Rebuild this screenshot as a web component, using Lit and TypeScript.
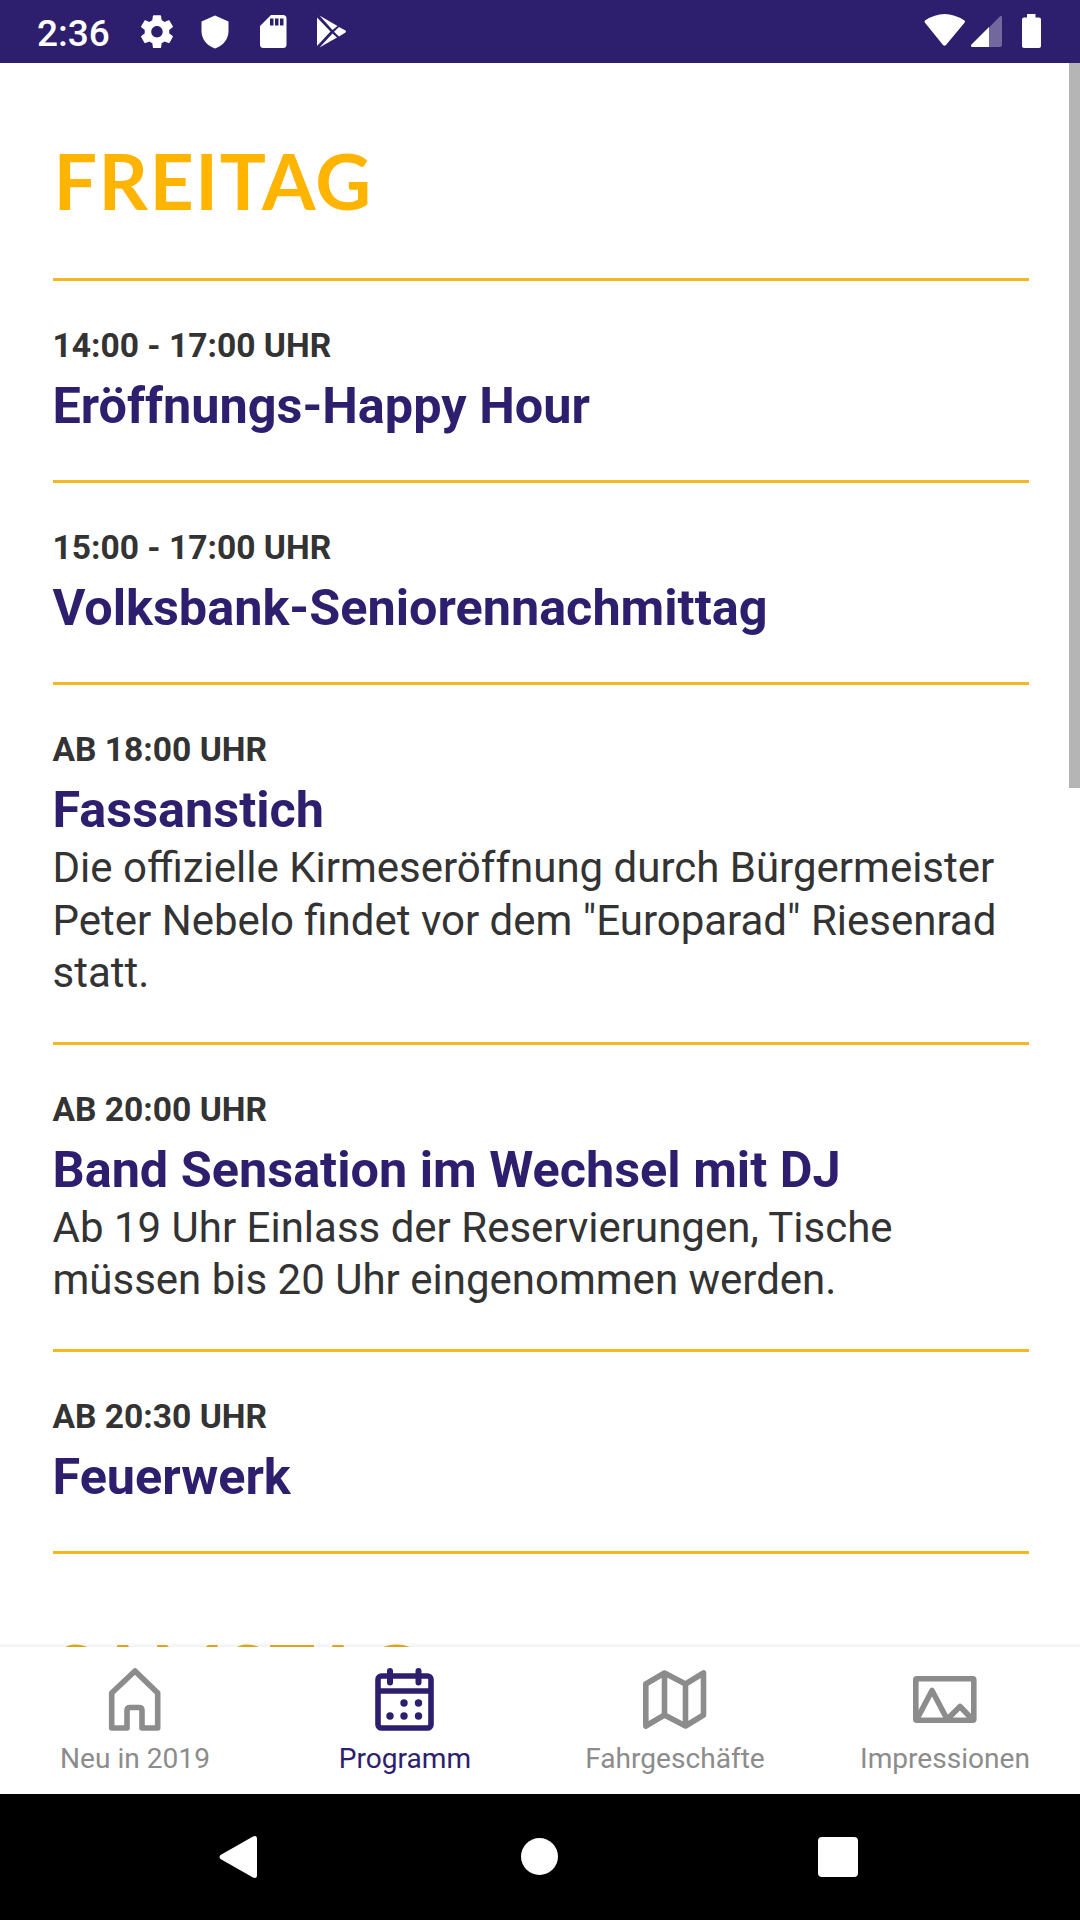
import { LitElement, html, css, svg, nothing } from "lit";
import { customElement } from "lit/decorators.js";

interface Entry {
  time: string;
  title: string;
  text?: string[];
}

const FRIDAY: Entry[] = [
  { time: "14:00 - 17:00 UHR", title: "Eröffnungs-Happy Hour" },
  { time: "15:00 - 17:00 UHR", title: "Volksbank-Seniorennachmittag" },
  {
    time: "AB 18:00 UHR",
    title: "Fassanstich",
    text: [
      "Die offizielle Kirmeseröffnung durch Bürgermeister",
      'Peter Nebelo findet vor dem "Europarad" Riesenrad',
      "statt.",
    ],
  },
  {
    time: "AB 20:00 UHR",
    title: "Band Sensation im Wechsel mit DJ",
    text: ["Ab 19 Uhr Einlass der Reservierungen, Tische", "müssen bis 20 Uhr eingenommen werden."],
  },
  { time: "AB 20:30 UHR", title: "Feuerwerk" },
];

const homeIcon = svg`<path d="M27 4 L49.700 26 V61 H34 V43.500 Q34 40.500 31 40.500 H22 Q19 40.500 19 43.500 V61 H3.700 V26 Z"/>`;
const calendarIcon = svg`
  <rect x="3" y="9" width="53" height="52" rx="3.500"/>
  <path d="M3 24 H56"/>
  <path d="M15 4 V15.500 M43.500 4 V15.500" stroke-linecap="round" stroke-width="6"/>
  <g class="dots"><circle cx="29" cy="36" r="3.700"/><circle cx="43.500" cy="36" r="3.700"/>
  <circle cx="15" cy="49" r="3.700"/><circle cx="29" cy="49" r="3.700"/><circle cx="43.500" cy="49" r="3.700"/></g>`;

@customElement("app-root")
export class AppRoot extends LitElement {
  static styles = css`
    :host {
      display: flex;
      flex-direction: column;
      width: 1080px;
      height: 1920px;
      overflow: hidden;
      background: #fff;
      font-family: Roboto, sans-serif;
      color: #333;
    }
    svg { display: block; }
    .status {
      height: 63px;
      flex: none;
      box-sizing: border-box;
      background: #2d1e6e;
      color: #fff;
      display: flex;
      align-items: center;
      padding-left: 37px;
    }
    .clock { width: 101px; font-size: 37px; font-weight: 500; line-height: 63px; padding-top: 3px; }
    .right { margin-left: auto; }
    .scroll {
      flex: 1;
      min-height: 0;
      overflow: hidden;
      display: flex;
      justify-content: space-between;
    }
    .program { width: 976px; padding-left: 52.5px; }
    .bar { width: 11px; height: 725px; background: #b5b5b5; }
    .day {
      height: 218px;
      box-sizing: border-box;
      padding: 70px 0 0 1px;
      font-family: Lato, sans-serif;
      font-weight: 700;
      font-size: 77px;
      line-height: 94px;
      letter-spacing: 1.500px;
      color: #ffb400;
      white-space: nowrap;
      border-bottom: 3px solid #f6b81f;
    }
    .day.next { border: 0; color: #e6ac20; padding-top: 70px; }
    .entry {
      box-sizing: border-box;
      padding: 44px 0 42px;
      border-bottom: 3px solid #f6b81f;
    }
    .time { font-size: 33.6px; line-height: 42px; font-weight: 700; white-space: nowrap; }
    .title {
      font-size: 50.4px;
      line-height: 60px;
      padding: 9px 0 2px;
      font-weight: 700;
      color: #2d1e6e;
      white-space: nowrap;
    }
    .text { font-size: 42px; line-height: 52.500px; white-space: nowrap; }
    .tabs {
      position: relative;
      height: 147px;
      flex: none;
      display: grid;
      grid-template-columns: repeat(4, 270px);
      background: #fff;
    }
    .tabs::before {
      content: "";
      position: absolute;
      left: 0;
      right: 0;
      top: -4px;
      height: 4px;
      background: linear-gradient(rgba(0, 0, 0, 0.01), rgba(0, 0, 0, 0.05));
    }
    .tab {
      display: flex;
      flex-direction: column;
      align-items: center;
      padding-top: 20px;
      color: #8c8c8c;
      font-size: 28.1px;
      line-height: 36px;
      gap: 8px;
      white-space: nowrap;
    }
    .tab.active { color: #2d1e6e; }
    .icon { fill: none; stroke: currentColor; stroke-width: 5.600; stroke-linejoin: round; }
    .dots { fill: currentColor; stroke: none; }
    .nav { height: 126px; flex: none; background: #000; }
  `;

  private entry(e: Entry) {
    return html`<article class="entry">
      <div class="time">${e.time}</div>
      <div class="title">${e.title}</div>
      ${e.text ? e.text.map((line) => html`<div class="text">${line}</div>`) : nothing}
    </article>`;
  }

  private tab(label: string, width: number, icon: unknown, active = false) {
    return html`<div class="tab ${active ? "active" : ""}">
      <svg class="icon" width=${width} height="66" viewBox="0 0 ${width} 66">${icon}</svg>
      <span>${label}</span>
    </div>`;
  }

  render() {
    return html`
      <header class="status">
        <div class="clock">2:36</div>
        <svg width="220" height="63" viewBox="0 0 220 63" fill="#fff">
          <g transform="translate(-0.700 12) scale(1.64)">
            <path d="M19.430 12.980c.04-.32.07-.64.07-.98s-.03-.66-.07-.98l2.110-1.650c.19-.15.24-.42.12-.64l-2-3.460c-.12-.22-.39-.3-.61-.22l-2.490 1c-.52-.4-1.080-.73-1.690-.98l-.38-2.650C14.460 2.180 14.250 2 14 2h-4c-.25 0-.46.18-.49.42l-.38 2.650c-.61.25-1.170.59-1.690.98l-2.490-1c-.23-.09-.49 0-.61.22l-2 3.460c-.13.22-.07.49.12.64l2.110 1.650c-.04.32-.07.65-.07.98s.03.66.07.98l-2.110 1.650c-.19.15-.24.42-.12.64l2 3.460c.12.22.39.3.61.22l2.490-1c.52.4 1.080.73 1.690.98l.38 2.650c.03.24.24.42.49.42h4c.25 0 .46-.18.49-.42l.38-2.650c.61-.25 1.170-.59 1.690-.98l2.490 1c.23.09.49 0 .61-.22l2-3.460c.12-.22.07-.49-.12-.64l-2.110-1.650zM12 15.500c-1.930 0-3.500-1.570-3.500-3.500s1.570-3.500 3.500-3.500 3.500 1.570 3.500 3.500-1.570 3.500-3.500 3.500z"/>
          </g>
          <path d="M77 15.500 L90.500 21.500 V31 C90.500 39 85 46 77 48.500 C69 46 63.500 39 63.500 31 V21.500 Z"/>
          <path fill-rule="evenodd" d="M133 15 H145 Q148.500 15 148.500 18.500 V44.500 Q148.500 48 145 48 H125.500 Q122 48 122 44.500 V26 Z M132 18.500 V25.500 H135.500 V18.500 Z M137 18.500 V25.500 H140.500 V18.500 Z M142 18.500 V25.500 H145.500 V18.500 Z"/>
          <path d="M179 17.500 L192.500 31.500 L179 46 Z M181.500 15.500 L199.500 26 L194.500 30 Z M181.500 47.500 L194.500 33.500 L199 37.500 Z M201 27 L207.500 30.500 Q208.500 31.500 207.500 32.500 L201 36.500 L196 31.800 Z"/>
        </svg>
        <svg class="right" width="160" height="63" viewBox="920 0 160 63" fill="#fff">
          <path d="M925 20.500 Q944.500 7.500 964.500 20.500 Q965.500 21.500 964.500 22.700 L946 45 Q944.500 46.500 943 45 L925 22.700 Q924 21.500 925 20.500 Z"/>
          <path d="M989 27.500 L1000 16.300 Q1002 15 1002 17.500 V45 Q1002 47 1000 47 H989 Z" opacity=".33"/>
          <path d="M989 27 V47 H972.500 Q970 46.500 971.500 44.500 Z"/>
          <path d="M1027 14 H1035.500 V17.500 H1039 Q1041 17.500 1041 19.500 V46 Q1041 48 1039 48 H1024 Q1022 48 1022 46 V19.500 Q1022 17.500 1024 17.500 H1027 Z"/>
        </svg>
      </header>
      <main class="scroll">
        <section class="program">
          <div class="day">FREITAG</div>
          ${FRIDAY.map((e) => this.entry(e))}
          <div class="day next">SAMSTAG</div>
        </section>
        <div class="bar"></div>
      </main>
      <nav class="tabs">
        ${this.tab("Neu in 2019", 55, homeIcon)}
        ${this.tab("Programm", 60, calendarIcon, true)}
        ${this.tab("Fahrgeschäfte", 64, svg`<path d="M2.800 17 L21.500 6 L42.500 17 L60.500 6 V48 L42.500 59 L21.500 48 L2.800 59 Z M21.500 6 V48 M42.500 17 V59"/>`)}
        ${this.tab("Impressionen", 64, svg`<rect x="2.800" y="11.700" width="58" height="41.500" rx="1"/><path d="M4 52 L19 23.500 L34.500 53 M33.500 53 L47 39.500 L60 53"/>`)}
      </nav>
      <footer class="nav">
        <svg width="1080" height="126" viewBox="0 0 1080 126" fill="#fff">
          <path d="M220.500 61 L253 42.500 Q257 41 257 45 V81 Q257 85 253 83.500 L220.500 65 Q218.500 63 220.500 61 Z"/>
          <circle cx="539.500" cy="62.500" r="18.500"/>
          <rect x="818" y="43" width="40" height="40" rx="4"/>
        </svg>
      </footer>
    `;
  }
}
